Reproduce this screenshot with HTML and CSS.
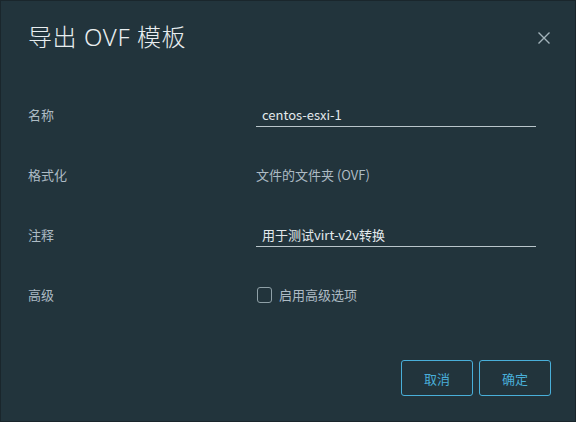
FILE: index.html
```html
<!DOCTYPE html>
<html lang="zh-CN">
<head>
<meta charset="utf-8">
<title>导出 OVF 模板</title>
<link rel="stylesheet" href="styles.css">
</head>
<body>
<div class="modal">
  <div class="modal-header">
    <h3 class="modal-title">导出 OVF 模板</h3>
    <button class="close" aria-label="关闭">
      <svg width="14" height="14" viewBox="0 0 14 14"><path d="M1.5 1.5 L12.5 12.5 M12.5 1.5 L1.5 12.5" stroke="#a3b3ba" stroke-width="1.4" fill="none"/></svg>
    </button>
  </div>
  <div class="modal-body">
    <div class="row">
      <label class="label">名称</label>
      <div class="field"><input class="input" type="text" value="centos-esxi-1"></div>
    </div>
    <div class="row">
      <label class="label">格式化</label>
      <div class="field"><span class="value">文件的文件夹 (OVF)</span></div>
    </div>
    <div class="row">
      <label class="label">注释</label>
      <div class="field"><input class="input" type="text" value="用于测试virt-v2v转换"></div>
    </div>
    <div class="row">
      <label class="label">高级</label>
      <div class="field"><span class="check"><span class="box"></span><span class="value">启用高级选项</span></span></div>
    </div>
  </div>
  <div class="modal-footer">
    <button class="btn">取消</button>
    <button class="btn">确定</button>
  </div>
</div>
</body>
</html>
```
FILE: styles.css
```css
* { box-sizing: border-box; }
html, body { margin: 0; padding: 0; }
body {
  width: 576px;
  height: 422px;
  background: #22343c;
  font-family: "Noto Sans CJK SC", "Noto Sans", sans-serif;
  font-size: 13px;
  color: #adbbc4;
}
.modal {
  width: 576px;
  height: 422px;
  background: #22343c;
  border: 1px solid #1a262c;
  display: flex;
  flex-direction: column;
}
.modal-header {
  height: 84px;
  display: flex;
  align-items: flex-start;
  justify-content: space-between;
  padding: 20px 24px 0 27px;
}
.modal-title {
  margin: 0;
  font-family: "Noto Sans", "Noto Sans CJK SC", sans-serif;
  font-size: 24px;
  font-weight: 300;
  letter-spacing: 0.6px;
  line-height: 32px;
  color: #e9eef0;
}
.close {
  background: none;
  border: 0;
  padding: 0;
  margin-top: 10px;
  width: 14px;
  height: 14px;
  display: flex;
}
.modal-body {
  display: flex;
  flex-direction: column;
}
.row {
  height: 60px;
  display: grid;
  grid-template-columns: 228px 280px;
  align-items: center;
  padding-left: 27px;
}
.label {
  color: #adbbc4;
  line-height: 18px;
}
.field { display: flex; align-items: center; }
.input {
  width: 280px;
  height: 23px;
  background: transparent;
  border: 0;
  border-bottom: 1px solid #b9c5ca;
  outline: none;
  padding: 0 6px;
  font: inherit;
  font-size: 13px;
  color: #e3e9ec;
}
.value { color: #adbbc4; line-height: 18px; }
.check { display: flex; align-items: center; gap: 7px; }
.box {
  width: 15px;
  height: 16px;
  border: 1px solid #8fa0a7;
  border-radius: 3px;
  margin-left: 1px;
}
.modal-footer {
  display: flex;
  justify-content: flex-end;
  gap: 6px;
  padding: 35px 24px 0 0;
}
.btn {
  width: 72px;
  height: 36px;
  background: transparent;
  border: 1px solid #49afd9;
  border-radius: 3px;
  color: #49afd9;
  font: inherit;
  font-size: 13px;
  padding: 0;
}
```
